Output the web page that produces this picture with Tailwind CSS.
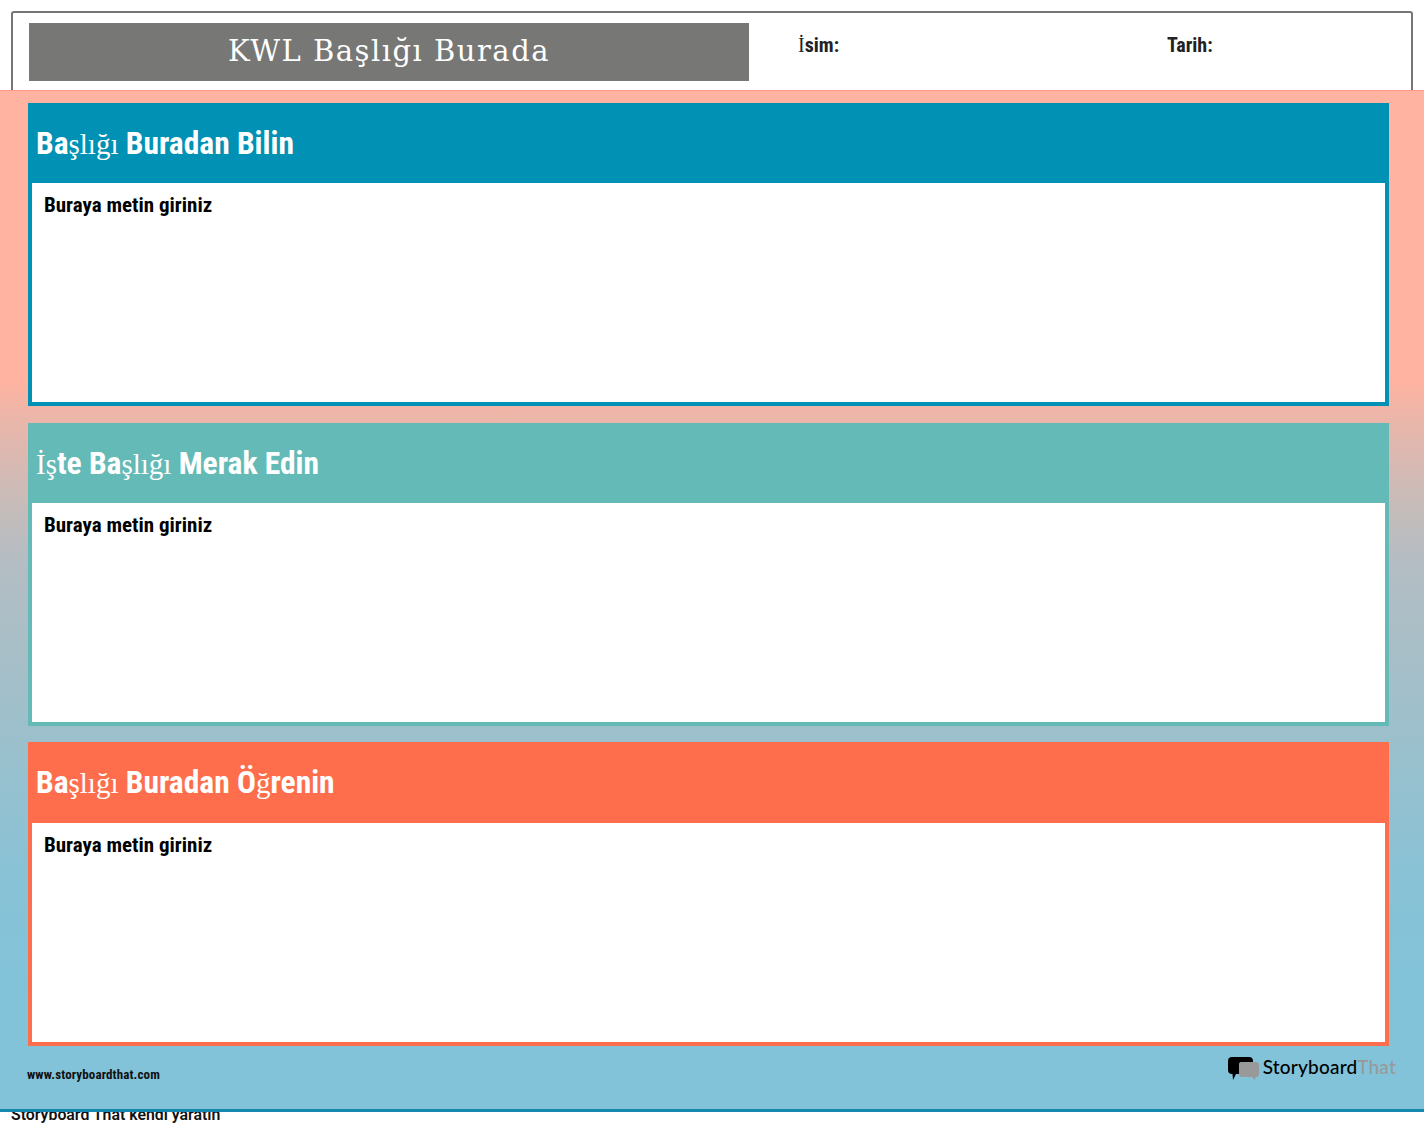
<!DOCTYPE html>
<html lang="tr">
<head>
    <meta charset="UTF-8">
    <title>KWL</title>
    <script src="https://cdn.jsdelivr.net/npm/@tailwindcss/browser@4"></script>
</head>
<body class="bg-white h-[1132px] overflow-hidden font-['Liberation_Sans_Narrow','Roboto_Condensed','Liberation_Sans',sans-serif]">
    <!-- Header -->
    <div class="h-[90px] pt-[11px] px-[11px] overflow-hidden">
        <div class="h-[90px] w-[1402px] border-2 border-[#757575] rounded-[3px] pl-[16px] pt-[10px] flex items-start">
            <div class="w-[720px] h-[58px] bg-[#777775] text-white text-center leading-[56px] text-[29px] tracking-[1.500px] font-['DejaVu_Serif'] font-normal">KWL Başlığı Burada</div>
            <div class="ml-[49px] w-[369px] mt-[10px] text-[20px] leading-6 font-bold text-[#222]"><span class="font-['Liberation_Serif'] font-normal">İ</span>sim:</div>
            <div class="mt-[10px] text-[20px] leading-6 font-bold text-[#222]">Tarih:</div>
        </div>
    </div>

    <!-- Gradient sheet -->
    <div class="relative z-10 w-[1424px] h-[1022px] border-t border-[#ff9a85] border-b-[3px] border-b-[#1488ae] bg-[linear-gradient(to_bottom,#ffb3a0_0px,#ffb3a0_290px,#eab6aa_330px,#c8bcb9_410px,#b4bdc3_470px,#9cc0cc_645px,#88c2d6_790px,#82c3d9_900px)] pt-[12px] pl-[28px]">
        <div class="w-[1361px] flex flex-col">
            <section class="h-[303px] flex flex-col">
                <h2 class="h-[80px] bg-[#0091b4] text-white text-[31.500px] font-bold leading-[82px] pl-2">Ba<span class="font-['Liberation_Serif'] font-normal text-[29px]">şlığı</span> Buradan Bilin</h2>
                <div class="flex-1 bg-white border-[4px] border-t-0 border-[#0091b4] pl-3 pt-[10px] text-[21px] leading-6 font-bold text-black">Buraya metin giriniz</div>
            </section>
            <section class="h-[303px] mt-[17px] flex flex-col">
                <h2 class="h-[80px] bg-[#64bab7] text-white text-[31.500px] font-bold leading-[82px] pl-2"><span class="font-['Liberation_Serif'] font-normal text-[29px]">İş</span>te Ba<span class="font-['Liberation_Serif'] font-normal text-[29px]">şlığı</span> Merak Edin</h2>
                <div class="flex-1 bg-white border-[4px] border-t-0 border-[#64bab7] pl-3 pt-[10px] text-[21px] leading-6 font-bold text-black">Buraya metin giriniz</div>
            </section>
            <section class="h-[304px] mt-[16px] flex flex-col">
                <h2 class="h-[81px] bg-[#ff6e4c] text-white text-[31.500px] font-bold leading-[82px] pl-2">Ba<span class="font-['Liberation_Serif'] font-normal text-[29px]">şlığı</span> Buradan Ö<span class="font-['Liberation_Serif'] font-normal text-[29px]">ğ</span>renin</h2>
                <div class="flex-1 bg-white border-[4px] border-t-0 border-[#ff6e4c] pl-3 pt-[10px] text-[21px] leading-6 font-bold text-black">Buraya metin giriniz</div>
            </section>
        </div>
        <!-- Footer -->
        <div class="flex justify-between w-[1369px] -ml-[1px] mt-[11px]">
            <div class="mt-[8px] text-[13px] leading-5 tracking-[0.13px] font-bold text-[#111]">www.storyboardthat.com</div>
            <div class="flex items-start h-[26px]">
                <svg width="32" height="24" viewBox="0 0 32 24">
                    <path d="M4 0H21Q25 0 25 4V5H14Q11 5 11 8V17H8L5 23L4.500 17H4Q0 17 0 13V4Q0 0 4 0Z" fill="#000"/>
                    <path d="M14 5H28Q31 5 31 8V17Q31 20 28 20H27.500L27 23L24 20H14Q11 20 11 17V8Q11 5 14 5Z" fill="#999"/>
                </svg>
                <span class="ml-[3px] -mt-[2px] text-[19px] leading-6 font-['Lato',sans-serif] font-medium tracking-[0.2px] text-black">Storyboard<span class="text-[#999]">That</span></span>
            </div>
        </div>
    </div>
    <!-- Clipped link under the sheet -->
    <div class="h-[20px] -mt-[1px] pl-[11px] text-[15.850px] leading-[7px] font-['Roboto',sans-serif] font-semibold text-[#111]">Storyboard That kendi yaratın</div>
</body>
</html>
